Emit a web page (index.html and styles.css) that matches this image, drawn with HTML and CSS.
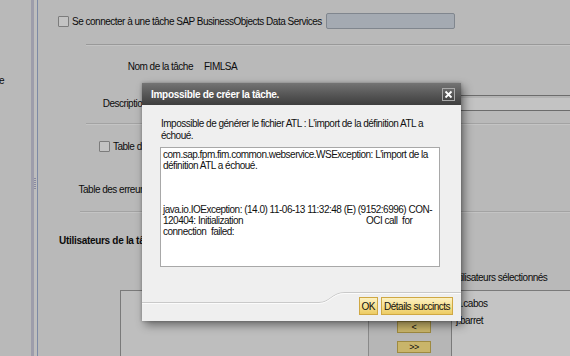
FILE: index.html
```html
<!DOCTYPE html>
<html lang="fr">
<head>
    <meta charset="UTF-8">
    <title>Impossible de créer la tâche</title>
    <link rel="stylesheet" href="styles.css">
</head>
<body>
    <div class="app">
        <aside class="side"><span class="side-text">e</span></aside>
        <div class="splitter"><span class="grip"></span></div>
        <main class="main">
            <div class="row-connect">
                <span class="check"></span>
                <span class="connect-text">Se connecter à une tâche SAP BusinessObjects Data Services</span>
                <span class="field field-dark"></span>
            </div>
            <div class="sep sep-1"></div>
            <div class="form-row row-name">
                <span class="label">Nom de la tâche</span>
                <span class="value">FIMLSA</span>
            </div>
            <div class="form-row row-desc">
                <span class="label">Description de la tâche</span>
                <span class="field field-desc"></span>
            </div>
            <div class="sep sep-2"></div>
            <div class="row-table">
                <span class="check"></span>
                <span>Table des erreurs</span>
            </div>
            <div class="form-row row-errors">
                <span class="label">Table des erreurs de la tâche</span>
            </div>
            <div class="sep sep-3"></div>
            <div class="section-title">Utilisateurs de la tâche</div>
            <div class="users-head">Utilisateurs sélectionnés</div>
            <div class="users-box">
                <div class="list list-avail"></div>
                <div class="move-buttons">
                    <span class="move">&lt;</span>
                    <span class="move">&gt;&gt;</span>
                </div>
                <div class="list list-sel">
                    <div>a.cabos</div>
                    <div>j.barret</div>
                </div>
            </div>
        </main>
    </div>

    <div class="dialog">
        <div class="dialog-title">
            <span>Impossible de créer la tâche.</span>
            <span class="close">
                <svg width="9" height="9" viewBox="0 0 9 9">
                    <path d="M1.5 1.5 L7.5 7.5 M7.5 1.5 L1.5 7.5" stroke="#fff" stroke-width="1.8"/>
                </svg>
            </span>
        </div>
        <div class="dialog-body">
            <p class="message">Impossible de générer le fichier ATL : L'import de la définition ATL a échoué.</p>
            <div class="details">
                <div>com.sap.fpm.fim.common.webservice.WSException: L'import de la</div>
                <div>définition ATL a échoué.</div>
                <div>&nbsp;</div>
                <div>&nbsp;</div>
                <div>&nbsp;</div>
                <div>java.io.IOException: (14.0) 11-06-13 11:32:48 (E) (9152:6996) CON-</div>
                <div class="split-line"><span class="split-left">120404: Initialization</span><span>OCI call&nbsp; for</span></div>
                <div>connection&nbsp; failed:</div>
            </div>
        </div>
        <div class="dialog-footer">
            <svg class="footer-curve" width="319" height="31" viewBox="0 0 319 31">
                <path d="M0 12.5 H177 C188 12.5 190 2.5 203 2.5 H319" fill="none" stroke="#c9c9c9"/>
                <path d="M0 13.5 H177 C188 13.5 190 3.5 203 3.5 H319" fill="none" stroke="#fbfbfb"/>
            </svg>
            <button class="btn">OK</button>
            <button class="btn">Détails succincts</button>
        </div>
    </div>
</body>
</html>
```

FILE: styles.css
```css
* {
    margin: 0;
    padding: 0;
    box-sizing: border-box;
}

html, body {
    width: 570px;
    height: 356px;
    overflow: hidden;
}

body {
    position: relative;
    background: #b9b9b9;
    font-family: 'Liberation Sans', Arial, sans-serif;
    font-size: 10px;
    letter-spacing: -0.5px;
    color: #0c0c0c;
}

.app {
    display: flex;
    height: 356px;
}

/* left pane + splitter */
.side {
    width: 31px;
    overflow: hidden;
    padding-top: 75px;
}

.side-text {
    display: block;
    margin-left: -1px;
    line-height: 12px;
}

.splitter {
    width: 7px;
    border-left: 3px solid #9d9dab;
    border-right: 1px solid #7d8aa6;
    background: #bdbdbd;
    position: relative;
}

.grip {
    position: absolute;
    left: 0;
    top: 178px;
    width: 2px;
    height: 12px;
    background: repeating-linear-gradient(#8a8aa0 0 1px, transparent 1px 2px);
}

/* main form */
.main {
    flex: 1;
    padding-top: 13px;
}

.check {
    width: 11px;
    height: 11px;
    border: 1px solid #7c7c7c;
    background: #c3c3c3;
    border-radius: 1px;
    flex-shrink: 0;
}

.row-connect {
    display: flex;
    align-items: center;
    height: 16px;
    padding-left: 20px;
    gap: 2px;
}

.connect-text {
    width: 253px;
    padding-left: 1px;
    white-space: nowrap;
}

.field {
    display: block;
    height: 16px;
}

.field-dark {
    width: 129px;
    background: #a4aab2;
    border: 1px solid #80868e;
    border-radius: 2px;
}

.sep {
    height: 1px;
    background: #999;
    box-shadow: 0 1px 0 #c4c4c4;
}

.sep-1 {
    margin: 15px 0 0 48px;
}

.sep-2 {
    margin: 12px 0 0 48px;
    background: #a3a3a3;
}

.sep-3 {
    margin: 14px 0 0 42px;
    background: #a3a3a3;
}

.form-row {
    display: flex;
    align-items: center;
    height: 16px;
    gap: 11px;
}

.label {
    width: 155px;
    text-align: right;
    white-space: nowrap;
}

.row-name {
    margin-top: 13px;
}

.row-desc {
    margin-top: 21px;
}

.field-desc {
    flex: 1;
    background: #c3c3c3;
    border-top: 1px solid #6c6c6c;
    border-bottom: 1px solid #6c6c6c;
    box-shadow: inset 0 2px 0 #b3b3b3;
}

.row-table {
    display: flex;
    align-items: center;
    gap: 3px;
    height: 11px;
    margin-top: 17px;
    padding-left: 61px;
}

.row-errors {
    margin-top: 29px;
}

.section-title {
    margin: 23px 0 0 21px;
    font-weight: bold;
    line-height: 12px;
    letter-spacing: -0.3px;
}

.users-head {
    margin: 25px 0 0 414px;
    line-height: 12px;
    white-space: nowrap;
}

.users-box {
    display: flex;
    margin: 6px 0 0 82px;
    height: 70px;
    border-top: 1px solid #7a7a7a;
}

.list {
    border-left: 1px solid #7a7a7a;
}

.list-avail {
    width: 248px;
    background: #bebebe;
}

.move-buttons {
    width: 83px;
    border-left: 1px solid #8a8a8a;
    background: #b6b6b6;
    display: flex;
    flex-direction: column;
    align-items: center;
    padding: 30px 0 0 8px;
    gap: 8px;
}

.move {
    width: 34px;
    height: 12px;
    line-height: 10px;
    text-align: center;
    font-size: 9px;
    background: #c9b56a;
    border: 1px solid #9e8a40;
}

.list-sel {
    flex: 1;
    background: #c4c4c4;
    padding: 4px 0 0 4px;
    line-height: 17px;
}

/* dialog */
.dialog {
    position: absolute;
    left: 142px;
    top: 83px;
    width: 319px;
    height: 238px;
    background: #efefef;
    box-shadow: 3px 4px 9px rgba(0, 0, 0, 0.45), 0 0 3px rgba(0, 0, 0, 0.25);
    display: flex;
    flex-direction: column;
}

.dialog-title {
    height: 22px;
    background: linear-gradient(#747474, #5a5a5a 45%, #3e3e3e);
    color: #fff;
    font-weight: bold;
    letter-spacing: -0.3px;
    display: flex;
    align-items: center;
    justify-content: space-between;
    padding: 0 6px 0 9px;
}

.close {
    width: 13px;
    height: 13px;
    border: 1px solid #a9a9a9;
    background: linear-gradient(#6a6a6a, #444);
    display: flex;
    align-items: center;
    justify-content: center;
}

.dialog-body {
    flex: 1;
    padding: 13px 20px 0 18px;
}

.message {
    padding-left: 1px;
    line-height: 12px;
    width: 272px;
    color: #111;
}

.details {
    margin-top: 5px;
    width: 280px;
    height: 120px;
    background: #fff;
    border: 1px solid #a8a8a8;
    padding: 1px 0 0 2px;
    line-height: 11px;
    color: #111;
    white-space: nowrap;
}

.split-line {
    display: flex;
}

.split-left {
    width: 203px;
}

.dialog-footer {
    position: relative;
    height: 31px;
    display: flex;
    justify-content: flex-end;
    align-items: flex-start;
    padding: 7px 8px 0 0;
    gap: 3px;
}

.footer-curve {
    position: absolute;
    left: 0;
    top: 0;
}

.btn {
    position: relative;
    height: 18px;
    padding: 0 2px;
    font-family: inherit;
    font-size: 10px;
    letter-spacing: -0.5px;
    color: #111;
    background: linear-gradient(#fcf1c2, #f6df8e 55%, #eccb63);
    border: 1px solid #cfa844;
}
```
